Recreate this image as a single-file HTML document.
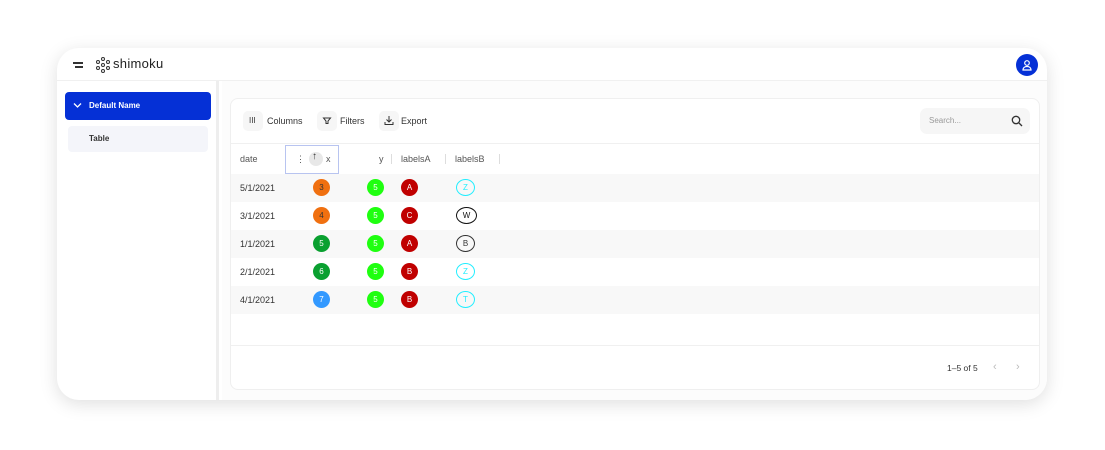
<!DOCTYPE html>
<html><head><style>
*{box-sizing:border-box;margin:0;padding:0}
body{width:1105px;height:450px;background:#fff;font-family:"Liberation Sans",sans-serif;position:relative;overflow:hidden;color:#333}
.frame{position:absolute;left:57px;top:48px;width:990px;height:352px;border-radius:22px;background:#fff;box-shadow:0 4px 18px rgba(0,0,0,.13);overflow:hidden}
.hdr{position:absolute;left:0;top:0;width:990px;height:33px;border-bottom:1px solid #f0f0f0}
.side{position:absolute;left:0;top:33px;width:162px;height:320px;border-right:3px solid #eee}
.main{position:absolute;left:165px;top:33px;right:0;bottom:0;background:#fcfcfc}
.card{position:absolute;left:8px;top:17px;width:810px;height:292px;border:1px solid #efefef;border-radius:8px;background:#fff}
.abs{position:absolute}
.t{font-size:9px;color:#333}
.row{position:absolute;left:0;width:808px;height:28px}
.c{position:absolute;width:17px;height:17px;border-radius:50%;font-size:8px;display:flex;align-items:center;justify-content:center;line-height:1}
</style></head><body>
<div class="frame">
 <div class="hdr">
  <div class="abs" style="left:16px;top:14px;width:10px;height:1.5px;background:#333"></div>
  <div class="abs" style="left:18px;top:18px;width:8px;height:1.5px;background:#333"></div>
  <svg class="abs" style="left:38px;top:9px" width="16" height="16" viewBox="0 0 16 16" fill="none" stroke="#333" stroke-width="1"><circle cx="8" cy="2" r="1.5"/><circle cx="3" cy="5" r="1.5"/><circle cx="13" cy="5" r="1.5"/><circle cx="8" cy="8" r="1.5"/><circle cx="3" cy="11" r="1.5"/><circle cx="13" cy="11" r="1.5"/><circle cx="8" cy="14" r="1.5"/></svg>
  <div class="abs" style="left:56px;top:8px;font-size:13px;color:#222;letter-spacing:.3px">shimoku</div>
  <div class="abs" style="left:959px;top:6px;width:22px;height:22px;border-radius:50%;background:#0530d6"></div>
  <svg class="abs" style="left:964px;top:11px" width="12" height="12" viewBox="0 0 12 12" fill="none" stroke="#fff" stroke-width="1.2"><circle cx="6" cy="4" r="2.3"/><path d="M2 11c0-2.5 2-3.5 4-3.5s4 1 4 3.5z"/></svg>
 </div>
 <div class="side">
  <div class="abs" style="left:8px;top:11px;width:146px;height:28px;border-radius:4px;background:#0530d6"></div>
  <svg class="abs" style="left:16px;top:21px" width="9" height="7" viewBox="0 0 9 7"><path d="M1 1.5l3.5 3.5 3.5-3.5" stroke="#fff" stroke-width="1.3" fill="none"/></svg>
  <div class="abs" style="left:32px;top:20px;font-size:8px;font-weight:bold;color:#fff">Default Name</div>
  <div class="abs" style="left:11px;top:45px;width:140px;height:26px;border-radius:4px;background:#f4f5fa"></div>
  <div class="abs" style="left:32px;top:53px;font-size:8px;font-weight:bold;color:#333">Table</div>
 </div>
 <div class="main">
  <div class="card">
   <div class="abs" style="left:12px;top:12px;width:20px;height:20px;border-radius:5px;background:#f6f6f6"></div>
   <div class="abs t" style="left:18px;top:17px;font-size:8px">III</div>
   <div class="abs t" style="left:36px;top:17px">Columns</div>
   <div class="abs" style="left:86px;top:12px;width:20px;height:20px;border-radius:5px;background:#f6f6f6"></div>
   <svg class="abs" style="left:91px;top:17px" width="10" height="10" viewBox="0 0 10 10"><path d="M1.5 2h7l-2.5 3v2.5h-2V5z" stroke="#333" fill="none" stroke-width="1"/></svg>
   <div class="abs t" style="left:109px;top:17px">Filters</div>
   <div class="abs" style="left:148px;top:12px;width:20px;height:20px;border-radius:5px;background:#f6f6f6"></div>
   <svg class="abs" style="left:153px;top:16px" width="10" height="11" viewBox="0 0 10 11"><path d="M5 1v6M2.5 4.5L5 7l2.5-2.5M1 7v2.5h8V7" stroke="#333" fill="none" stroke-width="1"/></svg>
   <div class="abs t" style="left:170px;top:17px">Export</div>
   <div class="abs" style="left:689px;top:9px;width:110px;height:26px;border-radius:7px;background:#f6f6f6"></div>
   <div class="abs" style="left:698px;top:17px;font-size:8px;color:#999">Search...</div>
   <svg class="abs" style="left:780px;top:16px" width="12" height="12" viewBox="0 0 12 12" fill="none" stroke="#333" stroke-width="1.3"><circle cx="5" cy="5" r="3.7"/><path d="M8 8l3 3"/></svg>
   <div class="abs" style="left:0;top:44px;width:808px;height:1px;background:#f0f0f0"></div>
   <div class="abs t" style="left:9px;top:55px;color:#555">date</div>
   <div class="abs" style="left:54px;top:46px;width:54px;height:29px;border:1px solid #b8c4f0"></div>
   <div class="abs" style="left:65px;top:55px;font-size:9px;color:#555">⋮</div>
   <div class="abs" style="left:78px;top:53px;width:14px;height:14px;border-radius:50%;background:#e8e8e8"></div>
   <div class="abs" style="left:81px;top:52px;font-size:10px;color:#333">↑</div>
   <div class="abs t" style="left:95px;top:55px;color:#555">x</div>
   <div class="abs t" style="left:148px;top:55px;color:#555">y</div>
   <div class="abs" style="left:160px;top:55px;width:1px;height:10px;background:#ddd"></div>
   <div class="abs t" style="left:170px;top:55px;color:#555">labelsA</div>
   <div class="abs" style="left:214px;top:55px;width:1px;height:10px;background:#ddd"></div>
   <div class="abs t" style="left:224px;top:55px;color:#555">labelsB</div>
   <div class="abs" style="left:268px;top:55px;width:1px;height:10px;background:#ddd"></div>

   <div class="row" style="top:75px;background:#f8f8f8"><div class="abs t" style="left:9px;top:9px">5/1/2021</div><div class="c" style="left:82px;top:5px;background:#f07010;color:#333">3</div><div class="c" style="left:136px;top:5px;background:#1fff10;color:#fff">5</div><div class="c" style="left:170px;top:5px;background:#c00000;color:#fff">A</div><div class="c" style="left:225px;top:5px;width:19px;border:1.5px solid #2ef;color:#2ef">Z</div></div>
   <div class="row" style="top:103px"><div class="abs t" style="left:9px;top:9px">3/1/2021</div><div class="c" style="left:82px;top:5px;background:#f07010;color:#333">4</div><div class="c" style="left:136px;top:5px;background:#1fff10;color:#fff">5</div><div class="c" style="left:170px;top:5px;background:#c00000;color:#fff">C</div><div class="c" style="left:225px;top:5px;width:21px;border:1.5px solid #111;color:#111">W</div></div>
   <div class="row" style="top:131px;background:#f8f8f8"><div class="abs t" style="left:9px;top:9px">1/1/2021</div><div class="c" style="left:82px;top:5px;background:#0aa030;color:#fff">5</div><div class="c" style="left:136px;top:5px;background:#1fff10;color:#fff">5</div><div class="c" style="left:170px;top:5px;background:#c00000;color:#fff">A</div><div class="c" style="left:225px;top:5px;width:19px;border:1.5px solid #333;color:#333">B</div></div>
   <div class="row" style="top:159px"><div class="abs t" style="left:9px;top:9px">2/1/2021</div><div class="c" style="left:82px;top:5px;background:#0aa030;color:#fff">6</div><div class="c" style="left:136px;top:5px;background:#1fff10;color:#fff">5</div><div class="c" style="left:170px;top:5px;background:#c00000;color:#fff">B</div><div class="c" style="left:225px;top:5px;width:19px;border:1.5px solid #2ef;color:#2ef">Z</div></div>
   <div class="row" style="top:187px;background:#f8f8f8"><div class="abs t" style="left:9px;top:9px">4/1/2021</div><div class="c" style="left:82px;top:5px;background:#3399ff;color:#fff">7</div><div class="c" style="left:136px;top:5px;background:#1fff10;color:#fff">5</div><div class="c" style="left:170px;top:5px;background:#c00000;color:#fff">B</div><div class="c" style="left:225px;top:5px;width:19px;border:1.5px solid #2ef;color:#2ef">T</div></div>
   <div class="abs" style="left:0;top:246px;width:808px;height:1px;background:#f0f0f0"></div>
   <div class="abs" style="left:716px;top:264px;font-size:8.5px;color:#333">1–5 of 5</div>
   <div class="abs" style="left:762px;top:262px;font-size:11px;color:#bbb">‹</div>
   <div class="abs" style="left:785px;top:262px;font-size:11px;color:#bbb">›</div>
  </div>
 </div>
</div>
</body></html>
